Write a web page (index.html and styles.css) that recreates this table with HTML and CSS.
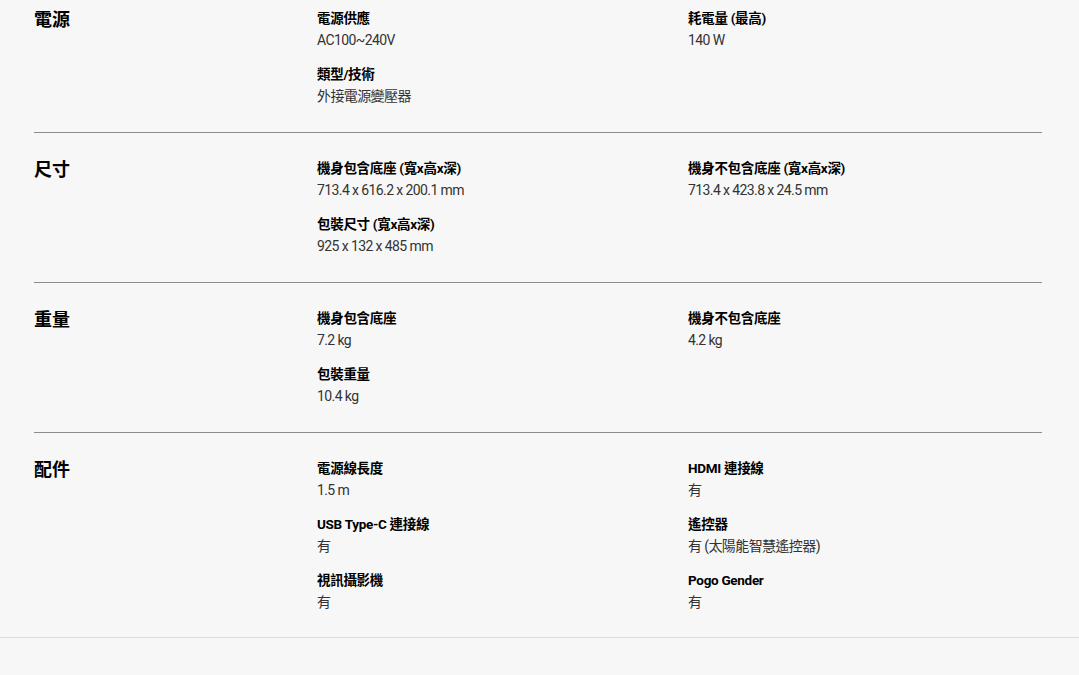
FILE: index.html
```html
<!DOCTYPE html>
<html lang="zh-Hant">
<head>
<meta charset="utf-8">
<title>規格</title>
<link rel="stylesheet" href="styles.css">
</head>
<body>
<div class="specs">
  <section class="group">
    <h3 class="group-title">電源</h3>
    <div class="items">
      <div class="item"><div class="label">電源供應</div><div class="value">AC100~240V</div></div>
      <div class="item"><div class="label">耗電量 (最高)</div><div class="value">140 W</div></div>
      <div class="item"><div class="label">類型/技術</div><div class="value">外接電源變壓器</div></div>
    </div>
  </section>
  <section class="group">
    <h3 class="group-title">尺寸</h3>
    <div class="items">
      <div class="item"><div class="label">機身包含底座 (寬x高x深)</div><div class="value">713.4 x 616.2 x 200.1 mm</div></div>
      <div class="item"><div class="label">機身不包含底座 (寬x高x深)</div><div class="value">713.4 x 423.8 x 24.5 mm</div></div>
      <div class="item"><div class="label">包裝尺寸 (寬x高x深)</div><div class="value">925 x 132 x 485 mm</div></div>
    </div>
  </section>
  <section class="group">
    <h3 class="group-title">重量</h3>
    <div class="items">
      <div class="item"><div class="label">機身包含底座</div><div class="value">7.2 kg</div></div>
      <div class="item"><div class="label">機身不包含底座</div><div class="value">4.2 kg</div></div>
      <div class="item"><div class="label">包裝重量</div><div class="value">10.4 kg</div></div>
    </div>
  </section>
  <section class="group last">
    <h3 class="group-title">配件</h3>
    <div class="items">
      <div class="item"><div class="label">電源線長度</div><div class="value">1.5 m</div></div>
      <div class="item"><div class="label">HDMI 連接線</div><div class="value">有</div></div>
      <div class="item"><div class="label">USB Type-C 連接線</div><div class="value">有</div></div>
      <div class="item"><div class="label">遙控器</div><div class="value">有 (太陽能智慧遙控器)</div></div>
      <div class="item"><div class="label">視訊攝影機</div><div class="value">有</div></div>
      <div class="item"><div class="label">Pogo Gender</div><div class="value">有</div></div>
    </div>
  </section>
</div>
</body>
</html>
```
FILE: styles.css
```css
html, body {
  margin: 0;
  padding: 0;
  background: #f7f7f7;
}
body {
  font-family: "Roboto", "Noto Sans CJK TC", sans-serif;
  color: #000;
}
.specs {
  border-bottom: 1px solid #dcdcdc;
}
.group {
  display: grid;
  grid-template-columns: 283px 1fr;
  margin: 0 37px 0 34px;
  padding: 24px 0 25px;
  border-bottom: 1px solid #8c8c8c;
}
.group:first-child {
  padding-top: 7px;
}
.group.last {
  border-bottom: none;
  padding-bottom: 24px;
}
.group-title {
  margin: 0;
  font-size: 18px;
  line-height: 22px;
  font-weight: 700;
  font-family: "Noto Sans CJK TC", sans-serif;
}
.items {
  display: grid;
  grid-template-columns: 371px 1fr;
  row-gap: 12px;
}
.label {
  font-size: 13.5px;
  line-height: 22px;
  font-weight: 700;
  letter-spacing: -0.3px;
}
.value {
  font-size: 14px;
  line-height: 20px;
  margin-top: 1px;
  margin-bottom: 1px;
  color: #333;
  letter-spacing: -0.6px;
}
```
